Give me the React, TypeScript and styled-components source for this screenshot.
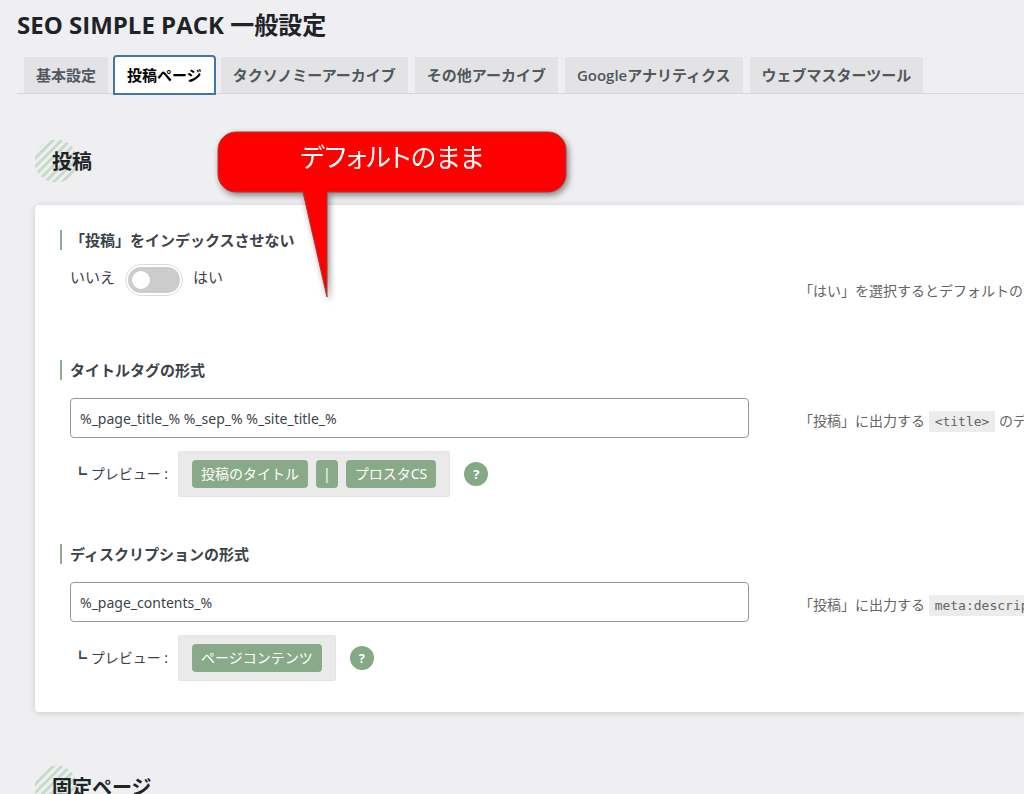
import React from "react";
import styled, { createGlobalStyle } from "styled-components";

const GlobalStyle = createGlobalStyle`
  *, *::before, *::after { box-sizing: border-box; }
  body {
    margin: 0;
    overflow: hidden;
    background: #efeff1;
    color: #3c434a;
    font-family: "Noto Sans", "Noto Sans CJK JP", sans-serif;
    font-size: 14px;
    line-height: 20px;
  }
`;

const Page = styled.main`
  position: relative;
  height: 100vh;
  overflow: hidden;
`;

const PageTitle = styled.h1`
  margin: 0;
  padding: 9px 17px 13px;
  color: #1d2327;
  font-family: "Open Sans", "Noto Sans CJK JP", sans-serif;
  font-size: 24px;
  font-weight: 700;
  line-height: 32px;
`;

const Tabs = styled.nav`
  display: flex;
  gap: 7px;
  margin-left: 17px;
  padding: 3px 7px 0;
  border-bottom: 1px solid #d6d7da;
`;

const Tab = styled.a<{ $active?: boolean }>`
  padding: 9px 12px;
  border-radius: ${(p) => (p.$active ? "2px 2px 0 0" : "0")};
  background: ${(p) => (p.$active ? "#fff" : "#e3e3e5")};
  box-shadow: ${(p) => (p.$active ? "0 0 0 2px #43779f" : "none")};
  color: ${(p) => (p.$active ? "#000" : "#50575e")};
  font-family: "Open Sans", "Noto Sans CJK JP", sans-serif;
  font-size: 15px;
  font-weight: 600;
  line-height: 18px;
  text-decoration: none;
  white-space: nowrap;
`;

const Sections = styled.div`
  display: flex;
  flex-direction: column;
  gap: 54px;
  padding: 46px 0 0 35px;
`;

const SectionTitle = styled.h2`
  display: flex;
  align-items: center;
  height: 43px;
  margin: 0 0 22px;
  padding-left: 17px;
  color: #1d2327;
  font-size: 20px;
  font-weight: 700;
  background: radial-gradient(circle 22px at 21px 21px, transparent 21px, #efeff1 22px),
    repeating-linear-gradient(135deg, #c8dacb 0 2px, #efeff1 3px 5px, #c8dacb 6px);
`;

const Card = styled.div`
  display: flex;
  flex-direction: column;
  gap: 47px;
  padding: 25px 0 31px 25px;
  border-radius: 4px 0 0 4px;
  background: #fff;
  box-shadow: 0 1px 6px rgba(0, 0, 0, 0.16);
`;

const Item = styled.div`
  display: grid;
  grid-template-columns: minmax(0, 1fr) 225px;
  column-gap: 50px;
  min-height: 83px;
`;

const ItemTitle = styled.h3`
  margin: 0 0 14px;
  padding-left: 8px;
  border-left: 2px solid #8cb08f;
  color: #3c434a;
  font-size: 15px;
  font-weight: 700;
  line-height: 20px;
`;

const ItemBody = styled.div`
  display: flow-root;
  padding-left: 10px;
`;

const Help = styled.p`
  margin: 0;
  padding-top: 50px;
  overflow: hidden;
  color: #646464;
  line-height: 22px;
  white-space: nowrap;
`;

const Code = styled.code`
  display: inline-block;
  padding: 0 6px;
  background: #ececec;
  font-family: "DejaVu Sans Mono", monospace;
  font-size: 13px;
  line-height: 21px;
`;

const ToggleRow = styled.div`
  display: flex;
  gap: 10px;
  font-size: 15px;
  line-height: 26px;
`;

const Toggle = styled.input`
  appearance: none;
  display: flex;
  align-items: center;
  width: 58px;
  height: 32px;
  margin: 0;
  padding: 2px;
  border: 1px solid #dcdcdc;
  border-radius: 16px;
  background: #ccc content-box;

  &::before {
    content: "";
    width: 18px;
    height: 18px;
    margin-left: 4px;
    border-radius: 50%;
    background: #fff;
  }
  &:checked::before {
    margin-left: 30px;
  }
`;

const TextInput = styled.input`
  display: block;
  width: 100%;
  height: 40px;
  margin: 4px 0 13px;
  padding: 0 9px;
  border: 1px solid #97999c;
  border-radius: 4px;
  background: #fff;
  color: #3c434a;
  font: inherit;
`;

const Preview = styled.div`
  display: flex;
  align-items: center;
  padding-left: 3px;
`;

const PreviewBox = styled.div`
  display: flex;
  gap: 8px;
  margin: 0 14px 0 10px;
  padding: 8px 13px;
  border: 1px solid #e4e4e4;
  border-radius: 2px;
  background: #eaeaea;
`;

const Chip = styled.span<{ $narrow?: boolean }>`
  padding: 4px ${(p) => (p.$narrow ? "7px" : "9px")};
  border-radius: 4px;
  background: #88aa88;
  color: #fff;
`;

const HelpButton = styled.button`
  width: 24px;
  height: 24px;
  padding: 0;
  border: 0;
  border-radius: 50%;
  background: #84a984;
  color: #fff;
  font: 700 13px/24px "Open Sans", sans-serif;
`;

const Callout = styled.div`
  position: absolute;
  top: 131px;
  left: 217px;
  width: 350px;
  height: 168px;
  filter: drop-shadow(2px 3px 3px rgba(0, 0, 0, 0.45));
`;

const CalloutShape = styled.svg`
  position: absolute;
  inset: 0;
`;

const CalloutText = styled.p`
  position: relative;
  margin: 0;
  padding-top: 10px;
  color: #fff;
  font-size: 26px;
  font-feature-settings: "palt";
  line-height: 32px;
  text-align: center;
`;

const tabs = [
  "基本設定",
  "投稿ページ",
  "タクソノミーアーカイブ",
  "その他アーカイブ",
  "Googleアナリティクス",
  "ウェブマスターツール",
];

type FormatFieldProps = {
  id: string;
  title: string;
  value: string;
  chips: string[];
  help: React.ReactNode;
};

function FormatField({ id, title, value, chips, help }: FormatFieldProps) {
  return (
    <Item>
      <div>
        <ItemTitle>
          <label htmlFor={id}>{title}</label>
        </ItemTitle>
        <ItemBody>
          <TextInput id={id} type="text" defaultValue={value} />
          <Preview>
            <span>┗ プレビュー :</span>
            <PreviewBox>
              {chips.map((chip) => (
                <Chip key={chip} $narrow={chip.length === 1}>
                  {chip}
                </Chip>
              ))}
            </PreviewBox>
            <HelpButton type="button">?</HelpButton>
          </Preview>
        </ItemBody>
      </div>
      <Help>{help}</Help>
    </Item>
  );
}

export default function App() {
  return (
    <>
      <GlobalStyle />
      <Page>
        <PageTitle>SEO SIMPLE PACK 一般設定</PageTitle>
        <Tabs>
          {tabs.map((tab, i) => (
            <Tab key={tab} href="#" $active={i === 1}>
              {tab}
            </Tab>
          ))}
        </Tabs>
        <Sections>
          <section>
            <SectionTitle>投稿</SectionTitle>
            <Card>
              <Item>
                <div>
                  <ItemTitle>「投稿」をインデックスさせない</ItemTitle>
                  <ItemBody>
                    <ToggleRow>
                      <label htmlFor="noindex">いいえ</label>
                      <Toggle id="noindex" type="checkbox" />
                      <label htmlFor="noindex">はい</label>
                    </ToggleRow>
                  </ItemBody>
                </div>
                <Help>「はい」を選択するとデフォルトの</Help>
              </Item>
              <FormatField
                id="title-format"
                title="タイトルタグの形式"
                value="%_page_title_% %_sep_% %_site_title_%"
                chips={["投稿のタイトル", "|", "プロスタCS"]}
                help={
                  <>
                    「投稿」に出力する <Code>&lt;title&gt;</Code> のデ
                  </>
                }
              />
              <FormatField
                id="description-format"
                title="ディスクリプションの形式"
                value="%_page_contents_%"
                chips={["ページコンテンツ"]}
                help={
                  <>
                    「投稿」に出力する <Code>meta:description</Code>
                  </>
                }
              />
            </Card>
          </section>
          <section>
            <SectionTitle>固定ページ</SectionTitle>
          </section>
        </Sections>
        <Callout>
          <CalloutShape width="350" height="168" viewBox="0 0 350 168" aria-hidden="true">
            <path
              d="M19 1H331A18 18 0 0 1 349 19V43A18 18 0 0 1 331 61H110V166L86 61H19A18 18 0 0 1 1 43V19A18 18 0 0 1 19 1Z"
              fill="#fe0000"
              stroke="#a33a3a"
              strokeWidth="1"
            />
          </CalloutShape>
          <CalloutText>デフォルトのまま</CalloutText>
        </Callout>
      </Page>
    </>
  );
}
